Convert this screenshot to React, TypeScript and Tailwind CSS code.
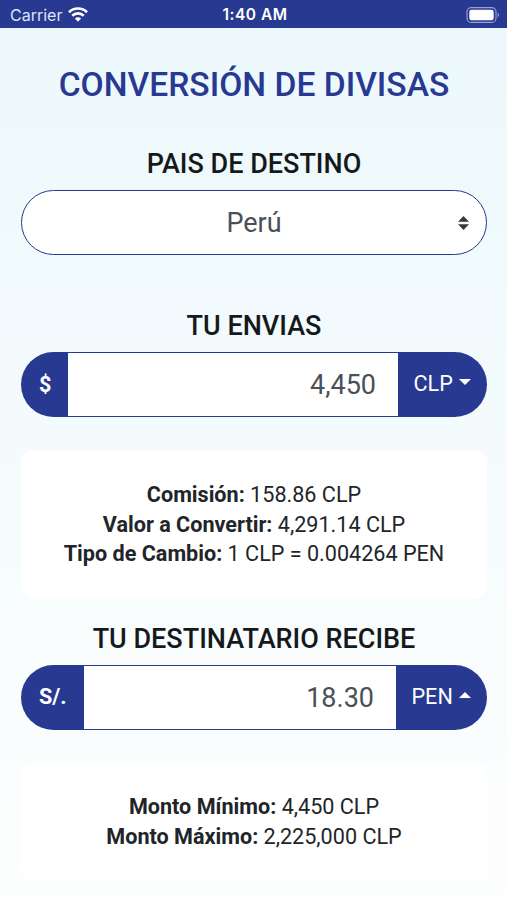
import { useState } from "react";
import clsx from "clsx";

const commission = [
  { label: "Comisión:", value: "158.86 CLP" },
  { label: "Valor a Convertir:", value: "4,291.14 CLP" },
  { label: "Tipo de Cambio:", value: "1 CLP = 0.004264 PEN" },
];

const limits = [
  { label: "Monto Mínimo:", value: "4,450 CLP" },
  { label: "Monto Máximo:", value: "2,225,000 CLP" },
];

function StatusBar() {
  return (
    <header className="grid h-7 grid-cols-3 items-center bg-[#283991] pt-[2px] pr-[7px] pl-[10px] font-['Inter'] text-[16px] text-white">
      <div className="flex items-center gap-[6px]">
        <span className="text-[#dfe4f6]">Carrier</span>
        <svg width="20" height="15" viewBox="0 0 20 15" fill="none" stroke="#fff" strokeWidth="2.7" className="mb-px">
          <path d="M1 5.2a12.8 12.8 0 0 1 18 0" />
          <path d="M4.3 8.7a8.1 8.1 0 0 1 11.4 0" />
          <path d="M10 14.8 6.9 11.6a4.5 4.5 0 0 1 6.2 0Z" fill="#fff" stroke="none" />
        </svg>
      </div>
      <span className="text-center text-[15.5px] font-semibold tracking-[0.5px] whitespace-nowrap">1:40 AM</span>
      <svg className="justify-self-end" width="34" height="16" viewBox="0 0 34 16">
        <rect x="1" y="0.6" width="29" height="14.8" rx="4.2" fill="none" stroke="#9aa3d3" strokeWidth="1.1" />
        <rect x="3.3" y="2.8" width="24.4" height="10.4" rx="2.2" fill="#fff" />
        <path d="M31.6 5.6c1.8.7 1.8 4.1 0 4.8Z" fill="#9aa3d3" />
      </svg>
    </header>
  );
}

function Heading({ children, className }: { children: string; className?: string }) {
  return (
    <h2 className={clsx("text-center text-[27px] leading-8 font-medium text-[#16191c]", className)}>
      {children}
    </h2>
  );
}

function Caret({ up }: { up?: boolean }) {
  return (
    <svg width="12" height="6" viewBox="0 0 12 6" fill="#fff" className={up ? "mb-1" : "mb-[5px]"}>
      <path d={up ? "M0 6h12L6 0Z" : "M0 0h12L6 6Z"} />
    </svg>
  );
}

type AmountProps = {
  symbol: string;
  currency: string;
  amount: string;
  up?: boolean;
  symbolClass: string;
  currencyClass: string;
};

function AmountInput({ symbol, currency, amount, up, symbolClass, currencyClass }: AmountProps) {
  const [value, setValue] = useState(amount);

  return (
    <div className="flex h-[65px] rounded-full bg-[#283991] p-px">
      <span className={clsx("flex items-center pl-[17px] text-[21.6px] font-bold text-white", symbolClass)}>
        {symbol}
      </span>
      <input
        value={value}
        onChange={(e) => setValue(e.target.value)}
        className="min-w-0 flex-1 bg-white pt-px pr-[22px] text-right text-[27px] text-[#495057] outline-none"
      />
      <button className={clsx("flex items-center gap-[6px] pl-[15.5px] text-[21.6px] text-white", currencyClass)}>
        {currency}
        <Caret up={up} />
      </button>
    </div>
  );
}

function InfoCard({ rows, className }: { rows: typeof limits; className?: string }) {
  return (
    <div className={clsx("rounded-[12px] bg-white py-[30px] text-center text-[21.6px] leading-[29.6px] text-[#212529]", className)}>
      {rows.map((row) => (
        <p key={row.label}>
          <strong className="font-bold">{row.label}</strong> {row.value}
        </p>
      ))}
    </div>
  );
}

export default function App() {
  return (
    <div className="flex h-[900px] w-full flex-col overflow-hidden bg-linear-to-b from-[#ecf8fc] to-[#fdfefe] font-['Roboto',sans-serif]">
      <StatusBar />
      <main className="flex flex-col pr-5 pl-[21px]">
        <h1 className="mt-[37px] text-center text-[33.6px] leading-10 font-medium text-[#283991]">
          CONVERSIÓN DE DIVISAS
        </h1>

        <Heading className="mt-[43px]">PAIS DE DESTINO</Heading>
        <button className="mt-[10px] grid h-[65px] grid-cols-[1fr_auto_1fr] items-center rounded-full border border-[#283991] bg-white text-[27px] text-[#495057]">
          <span className="col-start-2 pt-[2px]">Perú</span>
          <svg className="mr-[17px] justify-self-end" width="11" height="14" viewBox="0 0 11 14" fill="#343a40">
            <path d="M0 5.8h11L5.5 0ZM0 8.2h11L5.5 14Z" />
          </svg>
        </button>

        <Heading className="mt-[55px]">TU ENVIAS</Heading>
        <div className="mt-[10px]">
          <AmountInput symbol="$" currency="CLP" amount="4,450" symbolClass="w-[46px] pt-px" currencyClass="w-[88px]" />
        </div>
        <InfoCard rows={commission} className="mt-[33px]" />

        <Heading className="mt-6">TU DESTINATARIO RECIBE</Heading>
        <div className="mt-[10px]">
          <AmountInput symbol="S/." currency="PEN" amount="18.30" up symbolClass="w-[62px]" currencyClass="w-[90px]" />
        </div>
        <InfoCard rows={limits} className="mt-[32.4px]" />
      </main>
    </div>
  );
}
